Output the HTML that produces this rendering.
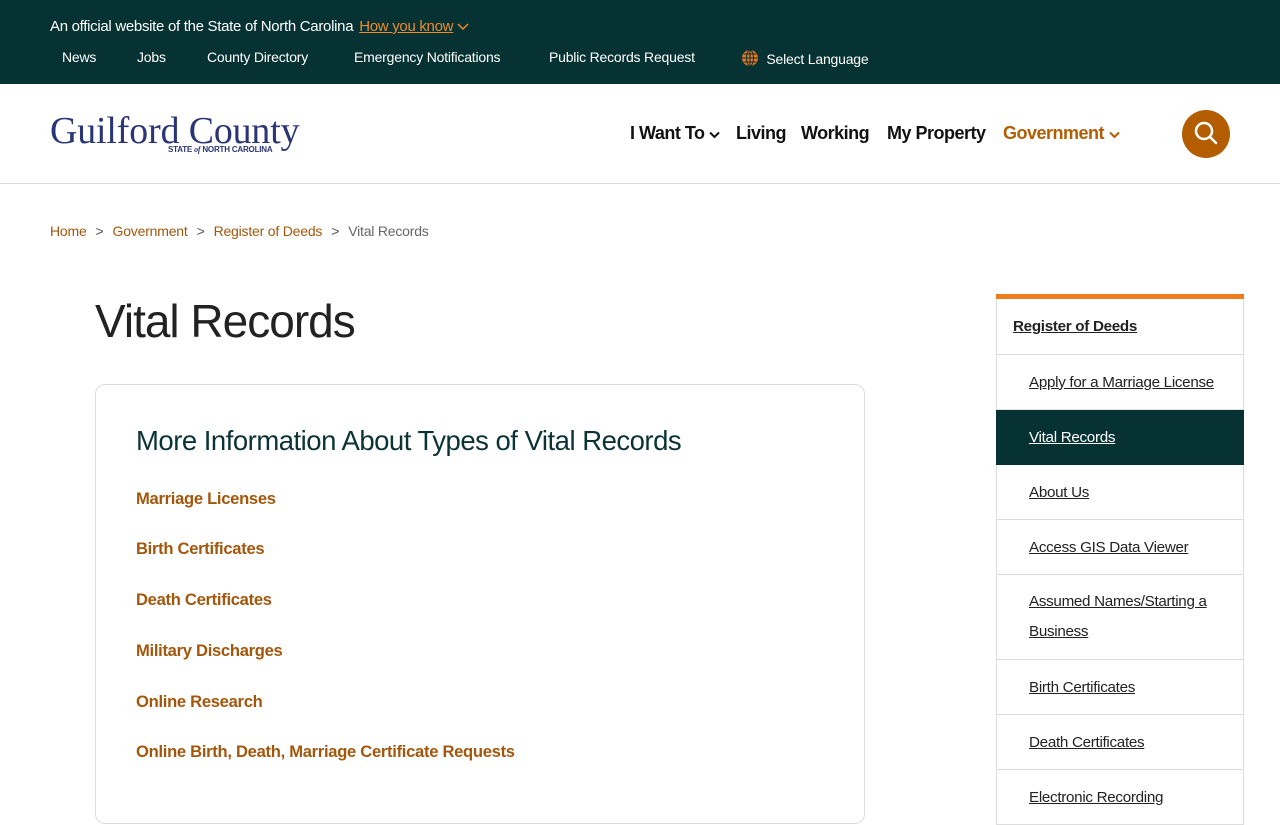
<!DOCTYPE html>
<html><head><meta charset="utf-8">
<style>
*{box-sizing:border-box;margin:0;padding:0}
body{width:1280px;height:800px;overflow:hidden;font-family:"Liberation Sans",sans-serif;background:#fff;color:#222}
a{color:inherit;text-decoration:none}
.top{background:#063233;height:84px;color:#fff;position:relative}
.top .off{position:absolute;left:50px;top:18px;font-size:15px;letter-spacing:-0.3px}
.top .off span{color:#f08a2c;text-decoration:underline;margin-left:6px}
.top .links{position:absolute;top:49px;left:0;font-size:14px;letter-spacing:-0.2px}
.top .links a{position:absolute;white-space:nowrap}
.hdr{height:100px;border-bottom:1px solid #ddd;position:relative}
.logo{position:absolute;left:50px;top:111px}
.nav{position:absolute;top:123px;font-size:18px;font-weight:bold;letter-spacing:-0.5px;color:#111}
.nav a{position:absolute;white-space:nowrap}
.search{position:absolute;left:1182px;top:110px;width:48px;height:48px;border-radius:50%;background:#b35c00}
.bc{position:absolute;top:223px;left:50px;font-size:14px;letter-spacing:-0.2px;color:#666}
.bc a{color:#a3570c}
.bc i{font-style:normal;margin:0 9px;color:#555}
h1{position:absolute;left:95px;top:294px;font-size:46px;font-weight:normal;letter-spacing:-1px;color:#222}
.card{position:absolute;left:95px;top:384px;width:770px;height:440px;border:1px solid #ddd;border-radius:10px}
.card h2{position:absolute;left:40px;top:40px;font-size:27.5px;font-weight:normal;color:#0b3335;letter-spacing:-0.5px}
.card a{position:absolute;left:40px;font-size:16.6px;font-weight:bold;color:#a3570c;letter-spacing:-0.3px;white-space:nowrap}
.side{position:absolute;left:996px;top:294px;width:248px;border-top:5px solid #ee7d1e}
.side div{border:1px solid #ddd;border-top:none;padding:0 16px 0 32px;font-size:15.2px;letter-spacing:-0.3px;color:#222;display:flex;align-items:center}
.side div span{text-decoration:underline}
.side .h{padding-left:16px;font-weight:bold;height:56px}
.side .act{background:#063233;color:#fff;border-color:#063233}
</style></head><body>
<div class="top">
<div class="off">An official website of the State of North Carolina<span>How you know</span> <svg width="12" height="8" viewBox="0 0 12 8" style="vertical-align:middle"><path d="M1 1l5 5 5-5" stroke="#f08a2c" stroke-width="1.5" fill="none"/></svg></div>
<div class="links">
<a style="left:62px">News</a><a style="left:137px">Jobs</a><a style="left:207px">County Directory</a><a style="left:354px">Emergency Notifications</a><a style="left:549px">Public Records Request</a>
<a style="left:741px"><svg width="18" height="18" viewBox="0 0 18 18" style="vertical-align:-3px"><circle cx="9" cy="9" r="8" fill="#e87722"/><g stroke="#063233" stroke-width="1" fill="none"><ellipse cx="9" cy="9" rx="3.5" ry="8"/><path d="M1 9h16M2.5 5h13M2.5 13h13M9 1v16"/></g></svg> &nbsp;Select Language</a>
</div>
</div>
<div class="hdr"></div>
<div class="logo">
<div style="font-family:'Liberation Serif',serif;font-size:37.8px;color:#2b3576;letter-spacing:-0.1px;line-height:40px">Guilford County</div>
<div style="font-size:8px;color:#2b3576;font-weight:bold;margin-left:118px;margin-top:-6px;letter-spacing:-0.2px">STATE <i style="font-family:'Liberation Serif',serif">of</i> NORTH CAROLINA</div>
</div>
<div class="nav">
<a style="left:630px">I Want To <svg width="11" height="8" viewBox="0 0 11 8"><path d="M1 1.5l4.5 4.5 4.5-4.5" stroke="#111" stroke-width="2" fill="none"/></svg></a>
<a style="left:736px">Living</a><a style="left:801px">Working</a><a style="left:887px">My Property</a>
<a style="left:1003px;color:#b35c00">Government <svg width="11" height="8" viewBox="0 0 11 8"><path d="M1 1.5l4.5 4.5 4.5-4.5" stroke="#b35c00" stroke-width="2" fill="none"/></svg></a>
</div>
<div class="search"><svg width="48" height="48" viewBox="0 0 48 48"><circle cx="22" cy="21" r="8" stroke="#fff" stroke-width="2.5" fill="none"/><path d="M28 27l6 6" stroke="#fff" stroke-width="2.5" stroke-linecap="round"/></svg></div>
<div class="bc"><a>Home</a><i>&gt;</i><a>Government</a><i>&gt;</i><a>Register of Deeds</a><i>&gt;</i>Vital Records</div>
<h1>Vital Records</h1>
<div class="card">
<h2>More Information About Types of Vital Records</h2>
<a style="top:104px">Marriage Licenses</a>
<a style="top:154px">Birth Certificates</a>
<a style="top:205px">Death Certificates</a>
<a style="top:256px">Military Discharges</a>
<a style="top:307px">Online Research</a>
<a style="top:357px">Online Birth, Death, Marriage Certificate Requests</a>
</div>
<div class="side">
<div class="h"><span>Register of Deeds</span></div>
<div style="height:55px"><span>Apply for a Marriage License</span></div>
<div class="act" style="height:55px"><span>Vital Records</span></div>
<div style="height:55px"><span>About Us</span></div>
<div style="height:55px"><span>Access GIS Data Viewer</span></div>
<div style="height:85px;line-height:30px"><span>Assumed Names/Starting a Business</span></div>
<div style="height:55px"><span>Birth Certificates</span></div>
<div style="height:55px"><span>Death Certificates</span></div>
<div style="height:55px"><span>Electronic Recording</span></div>
</div>
</body></html>
